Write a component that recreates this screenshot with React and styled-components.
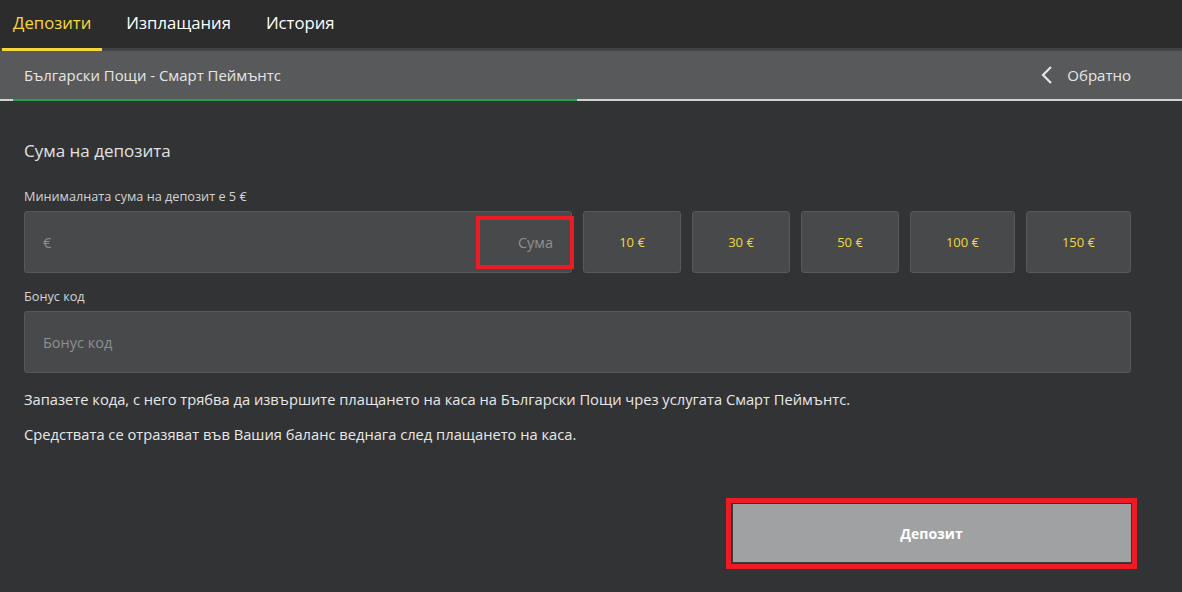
import React from "react";
import styled, { createGlobalStyle } from "styled-components";

const Global = createGlobalStyle`
  html, body { margin: 0; padding: 0; background: #323335; }
  body { font-family: "Open Sans", "Noto Sans", sans-serif; color: #e4e4e4; }
  * { box-sizing: border-box; }
`;

const Page = styled.div`
  width: 1182px;
  min-height: 592px;
  background: #323335;
`;

const Nav = styled.nav`
  display: flex;
  gap: 13px;
  height: 51px;
  padding-left: 2px;
  background: #2c2c2c;
  box-shadow: inset 0 -3px 0 #434446;
`;

const Tab = styled.div`
  display: flex;
  align-items: center;
  padding: 0 11px 3px;
  font-size: 16.7px;
  color: ${(p) => (p.$active ? "#f7d83c" : "#ffffff")};
  border-bottom: 3px solid ${(p) => (p.$active ? "#f7d83c" : "transparent")};
`;

const SubHeader = styled.div`
  display: flex;
  align-items: center;
  justify-content: space-between;
  height: 48px;
  padding: 0 51px 0 24px;
  background: #58595b;
  font-size: 14.9px;
  color: #e6e6e6;
`;

const Back = styled.div`
  display: flex;
  align-items: center;
  gap: 14px;
  font-size: 15px;
`;

const Progress = styled.div`
  height: 2px;
  background: #d2d2d2;
  display: flex;
`;

const Fill = styled.div`
  margin-left: 13px;
  height: 100%;
  background: #1fa447;
`;

const Content = styled.main`
  padding: 38px 51px 0 24px;
`;

const Title = styled.h2`
  margin: 0 0 24px;
  font-weight: 400;
  font-size: 17px;
  line-height: 24px;
  color: #e2e2e2;
`;

const Label = styled.div`
  font-size: 12.7px;
  line-height: 18px;
  color: #d4d4d4;
  margin: ${(p) => p.$mt || 0}px 0 6px;
`;

const Row = styled.div`
  display: flex;
  gap: 11px;
`;

const Field = styled.div`
  position: relative;
  display: flex;
  align-items: center;
  justify-content: space-between;
  width: ${(p) => p.$w || "100%"};
  height: 62px;
  padding: 0 18px;
  background: #48494b;
  border: 1px solid #57585a;
  border-radius: 3px;
  font-size: 14.5px;
  color: #8e8f91;
`;

const Highlight = styled.div`
  position: absolute;
  right: -3px;
  top: 4px;
  width: 98px;
  height: 53px;
  border: 4px solid #ed1c24;
`;

const Preset = styled.div`
  display: flex;
  align-items: center;
  justify-content: center;
  width: ${(p) => p.$w}px;
  height: 62px;
  background: #48494b;
  border: 1px solid #57585a;
  border-radius: 3px;
  font-size: 13px;
  color: #f2d83a;
`;

const Note = styled.p`
  margin: ${(p) => p.$mt}px 0 0;
  font-size: 14.7px;
  line-height: 20px;
  color: #e8e8e8;
`;

const Actions = styled.div`
  display: flex;
  justify-content: flex-end;
  margin-top: 60px;
`;

const DepositButton = styled.button`
  width: 399px;
  height: 59px;
  border: none;
  border-radius: 0;
  background: #a0a1a3;
  box-shadow: inset 1px -1px 0 #3b3c3e;
  outline: 5px solid #ed1c24;
  outline-offset: 1px;
  font-family: "Open Sans", "Noto Sans", sans-serif;
  font-weight: 700;
  font-size: 14px;
  color: #ffffff;
`;

const Chevron = () => (
  <svg width="12" height="18" viewBox="0 0 12 18">
    <polyline points="10,1 2,9 10,17" fill="none" stroke="#e6e6e6" strokeWidth="2.2" />
  </svg>
);

const presets = [
  { v: "10 €", w: 98 },
  { v: "30 €", w: 98 },
  { v: "50 €", w: 98 },
  { v: "100 €", w: 105 },
  { v: "150 €", w: 105 },
];

export default function App() {
  return (
    <Page>
      <Global />
      <Nav>
        <Tab $active>Депозити</Tab>
        <Tab>Изплащания</Tab>
        <Tab>История</Tab>
      </Nav>
      <SubHeader>
        <span>Български Пощи - Смарт Пеймънтс</span>
        <Back>
          <Chevron />
          <span>Обратно</span>
        </Back>
      </SubHeader>
      <Progress>
        <Fill style={{ width: "564px" }} />
      </Progress>
      <Content>
        <Title>Сума на депозита</Title>
        <Label>Минималната сума на депозит е 5 €</Label>
        <Row>
          <Field $w="548px">
            <span>€</span>
            <span>Сума</span>
            <Highlight />
          </Field>
          {presets.map((p) => (
            <Preset key={p.v} $w={p.w}>
              {p.v}
            </Preset>
          ))}
        </Row>
        <Label $mt={14}>Бонус код</Label>
        <Field>
          <span>Бонус код</span>
        </Field>
        <Note $mt={16}>
          Запазете кода, с него трябва да извършите плащането на каса на Български Пощи чрез услугата Смарт Пеймънтс.
        </Note>
        <Note $mt={15}>Средствата се отразяват във Вашия баланс веднага след плащането на каса.</Note>
        <Actions>
          <DepositButton>Депозит</DepositButton>
        </Actions>
      </Content>
    </Page>
  );
}
